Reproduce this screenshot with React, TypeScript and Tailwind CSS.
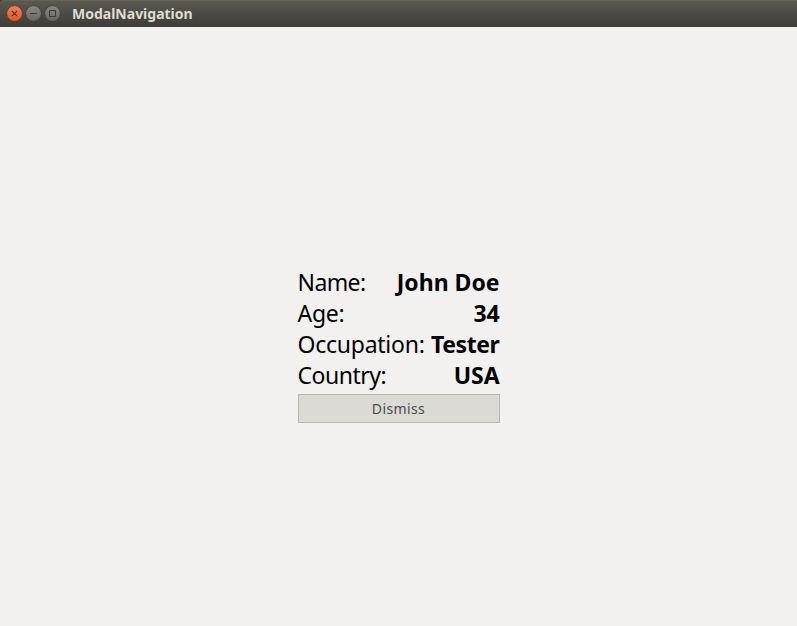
const rows = [
  { label: "Name:", value: "John Doe", labelClass: "tracking-[-0.6px]", valueClass: "tracking-[0px]" },
  { label: "Age:", value: "34", labelClass: "tracking-[-0.3px]", valueClass: "tracking-[-0.2px]" },
  { label: "Occupation:", value: "Tester", labelClass: "tracking-[-0.25px]", valueClass: "tracking-[-0.4px]" },
  { label: "Country:", value: "USA", labelClass: "tracking-[-0.5px]", valueClass: "tracking-[-0.1px]" },
];

function WindowButton({ kind }: { kind: "close" | "minimize" | "maximize" }) {
  const close = kind === "close";
  return (
    <button aria-label={kind} className="block h-[19px] w-[19px] shrink-0">
      <svg width="19" height="19" viewBox="0 0 19 19" fill="none">
        <defs>
          <linearGradient id={kind} x1="0" y1="0" x2="0" y2="1">
            <stop stopColor={close ? "#f7805a" : "#8b8982"} />
            <stop offset="1" stopColor={close ? "#ea5420" : "#686660"} />
          </linearGradient>
        </defs>
        <circle cx="9.5" cy="9.5" r="7.9" fill={`url(#${kind})`} stroke="#3a3934" strokeWidth="0.8" />
        {close && <path d="M6.8 6.8l5.4 5.4M12.2 6.8l-5.4 5.4" stroke="#43372c" strokeWidth="1.2" />}
        {kind === "minimize" && <path d="M6 9.5h7" stroke="#3c3b37" />}
        {kind === "maximize" && <path d="M6.5 6.5h6v6h-6z" stroke="#3c3b37" />}
      </svg>
    </button>
  );
}

export default function App() {
  return (
    <div className="flex h-screen w-full flex-col overflow-hidden bg-[#f2f1f0] font-['Noto_Sans',sans-serif] text-black">
      <div className="h-[27px] shrink-0 bg-[#561b4e]">
        <header className="flex h-full items-center rounded-tl-[3px] border-t border-[#656356] bg-linear-to-b from-[#5b5950] to-[#3d3c38] pb-px pl-[5px]">
          <div className="flex">
            <WindowButton kind="close" />
            <WindowButton kind="minimize" />
            <WindowButton kind="maximize" />
          </div>
          <h1 className="ml-[10px] text-[14px] leading-[20px] font-bold whitespace-nowrap text-[#dfdbd2]">ModalNavigation</h1>
        </header>
      </div>
      <main className="flex flex-1 flex-col items-center pt-[240px]">
        <section className="w-[202px]">
          <dl>
            {rows.map((row) => (
              <div key={row.label} className="flex h-[31px] items-center justify-between text-[23px] leading-[31px] whitespace-nowrap">
                <dt className={row.labelClass}>{row.label}</dt>
                <dd className={`font-bold ${row.valueClass}`}>{row.value}</dd>
              </div>
            ))}
          </dl>
          <button className="mt-[3px] flex h-[29px] w-full items-center justify-center border border-[#b7b6af] bg-[#dbdad5] text-[14px] tracking-[0.4px] text-[#4c4c4c]">
            Dismiss
          </button>
        </section>
      </main>
    </div>
  );
}
